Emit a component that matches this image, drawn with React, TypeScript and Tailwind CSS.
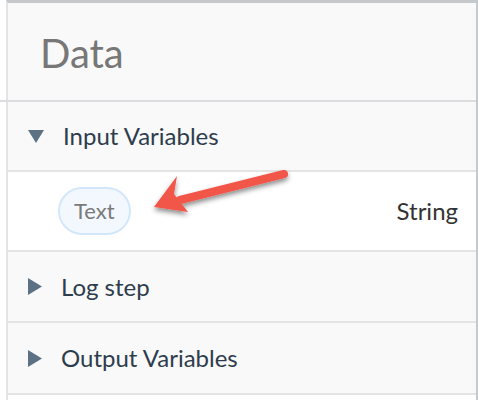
type Section = {
  label: string;
  open: boolean;
  height: string;
};

const font = { fontFamily: "Lato, 'Open Sans', sans-serif" };

function Caret({ open }: { open: boolean }) {
  return open ? (
    <svg width="16" height="13" viewBox="0 0 16 13" className="shrink-0">
      <path d="M0 0 L16 0 L8 13 Z" fill="#5d7185" />
    </svg>
  ) : (
    <svg width="14" height="17" viewBox="0 0 14 17" className="shrink-0">
      <path d="M0 0 L14 8.5 L0 17 Z" fill="#5d7185" />
    </svg>
  );
}

function SectionRow({ label, open, height }: Section) {
  return (
    <div className={`flex items-center gap-[19px] border-b-2 border-[#e4e4e4] bg-[#f9f9f9] pl-[20px] ${height}`}>
      <Caret open={open} />
      <span className="text-[24px] leading-none text-[#2e3d4d]">{label}</span>
    </div>
  );
}

function Arrow() {
  return (
    <svg
      className="pointer-events-none absolute left-[140px] top-[160px]"
      width="170"
      height="70"
      viewBox="0 0 170 70"
    >
      <defs>
        <filter id="sh" x="-20%" y="-40%" width="140%" height="180%">
          <feDropShadow dx="0" dy="3" stdDeviation="2.5" floodColor="#000" floodOpacity="0.45" />
        </filter>
      </defs>
      <g filter="url(#sh)">
        <line x1="144" y1="14" x2="40" y2="40" stroke="#f2574a" strokeWidth="8" strokeLinecap="round" />
        <path d="M14 47 L37 16 L34 34 L48 52 Z" fill="#f2574a" />
      </g>
    </svg>
  );
}

export default function App() {
  const sections: Section[] = [
    { label: "Log step", open: false, height: "h-[71px]" },
    { label: "Output Variables", open: false, height: "h-[72px]" },
  ];

  return (
    <div className="relative h-[400px] w-[478px] overflow-hidden bg-white" style={font}>
      <div className="ml-[6px] h-full border-l-2 border-r-2 border-t-[3px] border-[#e4e4e4] border-r-[#c6c9cc] border-t-[#c6c9cc]">
        <div className="flex h-[97px] items-center bg-[#f9f9f9] pl-[32px] pt-[2px]">
          <h1 className="text-[40px] leading-none text-[#777777]">Data</h1>
        </div>
        <div className="-ml-[8px] h-[2px] bg-[#dcdde0]" />
        <SectionRow label="Input Variables" open height="h-[70px]" />
        <div className="flex h-[80px] items-center justify-between border-b-2 border-[#e4e4e4] bg-white pl-[50px] pr-[18px]">
          <span className="rounded-full border-2 border-[#d3e7fb] bg-[#f3f8fe] px-[14px] py-[11px] text-[22px] leading-none text-[#7a7a7a]">
            Text
          </span>
          <span className="text-[24px] leading-none text-[#333333]">String</span>
        </div>
        {sections.map((s) => (
          <SectionRow key={s.label} {...s} />
        ))}
      </div>
      <Arrow />
    </div>
  );
}
